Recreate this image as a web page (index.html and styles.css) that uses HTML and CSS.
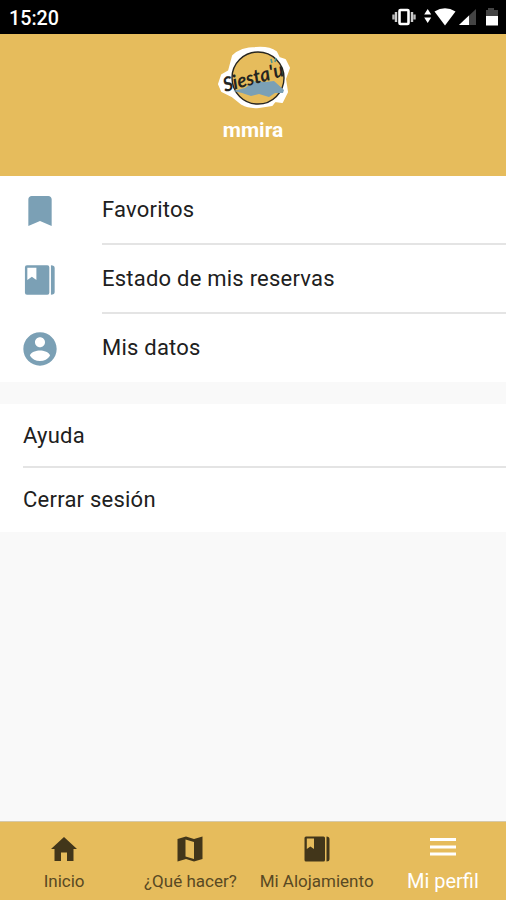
FILE: index.html
```
<!DOCTYPE html>
<html lang="es">
<head>
    <meta charset="utf-8">
    <title>Mi perfil</title>
    <link rel="stylesheet" href="styles.css">
</head>
<body>
    <div class="status-bar">
        <span class="time">15:20</span>
        <svg class="status-icons" width="108" height="22" viewBox="0 0 108 22">
            <rect x="7.500" y="3" width="9" height="14" rx="1" fill="none" stroke="#fff" stroke-width="2.600"/>
            <path d="M4 5v10M20 5v10" stroke="#ccc" stroke-width="2.400"/>
            <path d="M1.500 7.500v5M22.500 7.500v5" stroke="#bbb" stroke-width="2.400"/>
            <path d="M35.700 2l3.500 5.500h-7zM35.700 16l3.500-5.500h-7z" fill="#fff"/>
            <path d="M42.500 4.500Q53-2 63.500 4.500L53 18.500z" fill="#fff"/>
            <path d="M84 2v16H67z" fill="#444"/>
            <path d="M77 8.500V18H67z" fill="#fff"/>
            <path d="M96 1h6v2h4v6H94V3h2z" fill="#444"/>
            <path d="M94 9h12v9.500H94z" fill="#fff"/>
        </svg>
    </div>

    <header class="profile">
        <svg class="logo" width="76" height="66" viewBox="0 0 76 66">
            <path d="M16 11Q24 3 39 3Q52 2 59 7L62 13L68 15L72 23L68 34L70 47L65 57L58 56L55 60L42 62Q32 63 25 59L15 51L5 46L2 39L5 30L12 26Z" fill="#fff" stroke="#fff" stroke-width="2" stroke-linejoin="round"/>
            <circle cx="41" cy="33" r="26" fill="#e6bc5c" stroke="#282620" stroke-width="1.400"/>
            <path d="M16 46L28 43L38 36L48 37L57 36L67 45L66 48L58 48L52 52L42 49L34 51L25 48Z" fill="#7ba0b5"/>
            <text class="logo-text" x="8" y="47" transform="rotate(-15 8 47)" textLength="62" lengthAdjust="spacingAndGlyphs">Siesta'u</text>
            <path d="M55 18l-1-4M58 17l1-4" stroke="#4c9490" stroke-width="1.500"/>
        </svg>
        <h1>mmira</h1>
    </header>

    <main>
        <ul class="menu menu-icons">
            <li>
                <svg class="icon" viewBox="0 0 24 24"><path d="M17 3H7c-1.100 0-1.990.9-1.990 2L5 21l7-3 7 3V5c0-1.100-.9-2-2-2z"/></svg>
                <span>Favoritos</span>
            </li>
            <li>
                <svg class="icon" viewBox="0 0 24 24"><path fill-rule="evenodd" d="M2.200 1H17.500Q19 1 19 2.500V21.500Q19 23 17.500 23H2.200Q.7 23 .7 21.500V2.500Q.7 1 2.200 1ZM2.500 2.800V12L5.900 9.500L9.300 12V2.800ZM20.200 1Q23 1 23 3V21Q23 23 20.200 23Z"/></svg>
                <span>Estado de mis reservas</span>
            </li>
            <li>
                <svg class="icon" viewBox="0 0 24 24"><path d="M12 2C6.480 2 2 6.480 2 12s4.480 10 10 10 10-4.480 10-10S17.520 2 12 2zm0 3c1.660 0 3 1.340 3 3s-1.340 3-3 3-3-1.340-3-3 1.340-3 3-3zm0 14.200c-2.500 0-4.710-1.280-6-3.220.03-1.990 4-3.080 6-3.080 1.990 0 5.970 1.090 6 3.080-1.290 1.940-3.500 3.220-6 3.220z"/></svg>
                <span>Mis datos</span>
            </li>
        </ul>

        <ul class="menu menu-plain">
            <li><span>Ayuda</span></li>
            <li><span>Cerrar sesión</span></li>
        </ul>
    </main>

    <nav class="tabs">
        <a class="tab">
            <svg viewBox="0 0 26 26"><path d="M13 1L26 13H22.500V25H16V16.500H10V25H3.500V13H0Z"/></svg>
            <span>Inicio</span>
        </a>
        <a class="tab">
            <svg viewBox="0 0 26 26"><path fill-rule="evenodd" d="M.5 3L9 .5L17 3L25.500 .5V23L17 25.500L9 23L.5 25.500ZM8.500 3.500V20.500L17 23V6Z"/></svg>
            <span>¿Qué hacer?</span>
        </a>
        <a class="tab">
            <svg viewBox="0 0 26 26"><path fill-rule="evenodd" d="M2 .5H19.500Q21 .5 21 2V24Q21 25.500 19.500 25.500H2Q.5 25.500 .5 24V2Q.5 .5 2 .5ZM2.800 2.500V13L6.400 10.500L10 13V2.500ZM22.500 .5Q25.500 .5 25.500 3V23Q25.500 25.500 22.500 25.500Z"/></svg>
            <span>Mi Alojamiento</span>
        </a>
        <a class="tab active">
            <svg viewBox="0 0 26 26"><path d="M0 4h26v3H0zM0 11.500h26v3H0zM0 18.500h26v3H0z"/></svg>
            <span>Mi perfil</span>
        </a>
    </nav>
</body>
</html>
```

FILE: styles.css
```
* {
    box-sizing: border-box;
}

body {
    display: flex;
    flex-direction: column;
    height: 900px;
    margin: 0;
    font-family: Roboto, sans-serif;
    background-color: #f9f9f9;
    color: #202020;
}

.status-bar {
    display: flex;
    justify-content: space-between;
    align-items: center;
    height: 34px;
    padding: 2px 6px 0 9px;
    background-color: #000;
    color: #fff;
}

.time {
    font-size: 19.700px;
    font-weight: 500;
}

.profile {
    display: flex;
    flex-direction: column;
    align-items: center;
    height: 142px;
    padding-top: 11px;
    background-color: #e6bc5c;
}

.logo {
    margin-left: 4px;
}

.logo-text {
    font-family: Lato, sans-serif;
    font-size: 20px;
    font-style: italic;
    font-weight: bold;
    fill: #242420;
}

.profile h1 {
    margin: 6px 0 0;
    font-size: 21px;
    font-weight: 700;
    line-height: 26px;
    color: #fff;
}

.menu {
    margin: 0;
    padding: 0;
    list-style: none;
    background-color: #fff;
    font-size: 22px;
    letter-spacing: 0.23px;
}

.menu li {
    display: flex;
    align-items: center;
}

.menu li span {
    flex: 1;
    border-bottom: 2px solid #e4e4e4;
}

.menu li:last-child span {
    border-bottom: none;
}

.menu-icons {
    height: 206px;
    padding-left: 20px;
}

.menu-icons span {
    height: 69px;
    line-height: 67px;
}

.menu-icons li:last-child span {
    line-height: 68px;
}

.icon {
    width: 40px;
    height: 40px;
    margin-right: 42px;
    fill: #7ba0b5;
}

.menu-icons li:nth-child(2) .icon {
    width: 32px;
    height: 32px;
    margin: 0 46px 0 4px;
}

.menu-plain {
    height: 128px;
    margin-top: 22px;
    padding-left: 23px;
}

.menu-plain span {
    height: 64px;
    line-height: 63px;
}

.tabs {
    display: grid;
    grid-template-columns: repeat(4, 1fr);
    height: 79px;
    margin-top: auto;
    padding-left: 1px;
    background-color: #e6bc5c;
    border-top: 1px solid #d5c9ab;
}

.tab {
    display: flex;
    flex-direction: column;
    align-items: center;
    padding-top: 14px;
    font-size: 17px;
    line-height: 24px;
    color: #594923;
    white-space: nowrap;
}

.tab svg {
    width: 26px;
    height: 26px;
    margin-bottom: 7px;
    fill: #42361a;
}

.tab.active {
    padding-top: 12px;
    font-size: 20px;
    color: #fff;
}

.tab.active svg {
    margin-bottom: 9px;
    fill: #fff;
}
```
